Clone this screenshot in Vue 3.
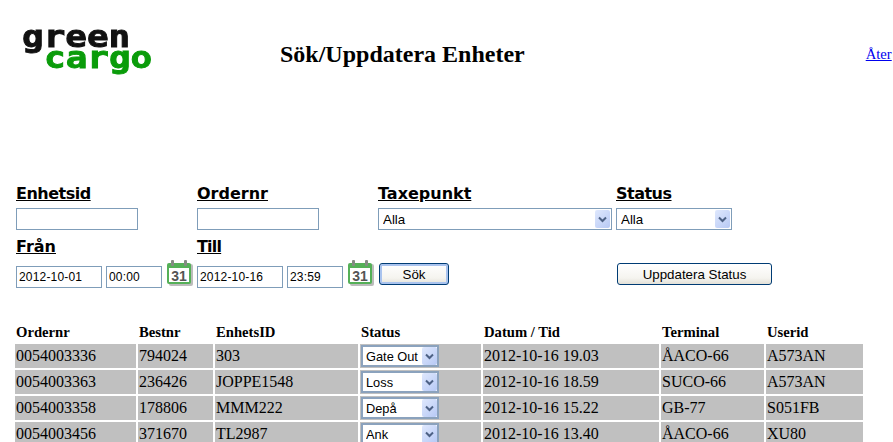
<script setup>
const rows = [
  { order: '0054003336', best: '794024', id: '303', status: 'Gate Out', date: '2012-10-16 19.03', terminal: 'ÅACO-66', user: 'A573AN' },
  { order: '0054003363', best: '236426', id: 'JOPPE1548', status: 'Loss', date: '2012-10-16 18.59', terminal: 'SUCO-66', user: 'A573AN' },
  { order: '0054003358', best: '178806', id: 'MMM222', status: 'Depå', date: '2012-10-16 15.22', terminal: 'GB-77', user: 'S051FB' },
  { order: '0054003456', best: '371670', id: 'TL2987', status: 'Ank', date: '2012-10-16 13.40', terminal: 'ÅACO-66', user: 'XU80' },
]
const headers = ['Ordernr', 'Bestnr', 'EnhetsID', 'Status', 'Datum / Tid', 'Terminal', 'Userid']
const widths = [121, 75, 143, 121, 176, 103, 97]
</script>

<template>
  <div class="page">
    <header class="top">
      <div class="logo" aria-label="green cargo">
        <span class="logo-green">green</span>
        <span class="logo-cargo">cargo</span>
      </div>
      <h1 class="title">Sök/Uppdatera Enheter</h1>
      <a class="back" href="#">Åter</a>
    </header>

    <form class="filters" @submit.prevent>
      <div class="cell">
        <label class="lbl tight">Enhetsid</label>
        <input class="field w122" type="text" />
      </div>
      <div class="cell">
        <label class="lbl">Ordernr</label>
        <input class="field w122" type="text" />
      </div>
      <div class="cell">
        <label class="lbl">Taxepunkt</label>
        <span class="sel w234">
          <select><option>Alla</option></select>
          <span class="arrow"><svg width="9" height="7" viewBox="0 0 9 7"><path d="M1 1.5 L4.5 5 L8 1.5" fill="none" stroke="#4d6185" stroke-width="2"/></svg></span>
        </span>
      </div>
      <div class="cell">
        <label class="lbl tight">Status</label>
        <span class="sel w116">
          <select><option>Alla</option></select>
          <span class="arrow"><svg width="9" height="7" viewBox="0 0 9 7"><path d="M1 1.5 L4.5 5 L8 1.5" fill="none" stroke="#4d6185" stroke-width="2"/></svg></span>
        </span>
      </div>

      <div class="cell second">
        <label class="lbl">Från</label>
        <div class="dates">
          <input class="field date" type="text" value="2012-10-01" />
          <input class="field time" type="text" value="00:00" />
          <svg class="cal" width="26" height="26" viewBox="0 0 26 26">
            <rect x="2" y="4" width="24" height="22" rx="2" fill="#bcbcbc"/>
            <rect x="0" y="3" width="24" height="21" rx="2" fill="#55b058"/>
            <rect x="2" y="8" width="20" height="14" fill="#fff"/>
            <rect x="4" y="0" width="3" height="6" rx="1" fill="#858b84"/>
            <rect x="17" y="0" width="3" height="6" rx="1" fill="#858b84"/>
            <text x="12" y="20.5" class="cal-num">31</text>
          </svg>
        </div>
      </div>
      <div class="cell second">
        <label class="lbl narrow">Till</label>
        <div class="dates">
          <input class="field date" type="text" value="2012-10-16" />
          <input class="field time" type="text" value="23:59" />
          <svg class="cal" width="26" height="26" viewBox="0 0 26 26">
            <rect x="2" y="4" width="24" height="22" rx="2" fill="#bcbcbc"/>
            <rect x="0" y="3" width="24" height="21" rx="2" fill="#55b058"/>
            <rect x="2" y="8" width="20" height="14" fill="#fff"/>
            <rect x="4" y="0" width="3" height="6" rx="1" fill="#858b84"/>
            <rect x="17" y="0" width="3" height="6" rx="1" fill="#858b84"/>
            <text x="12" y="20.5" class="cal-num">31</text>
          </svg>
        </div>
      </div>
      <div class="cell second btn-cell">
        <button class="btn primary" type="button">Sök</button>
      </div>
      <div class="cell second btn-cell">
        <button class="btn wide" type="button">Uppdatera Status</button>
      </div>
    </form>

    <table class="grid">
      <colgroup>
        <col v-for="w in widths" :key="w" :style="{ width: w + 'px' }" />
      </colgroup>
      <thead>
        <tr><th v-for="h in headers" :key="h">{{ h }}</th></tr>
      </thead>
      <tbody>
        <tr v-for="r in rows" :key="r.order">
          <td>{{ r.order }}</td>
          <td>{{ r.best }}</td>
          <td>{{ r.id }}</td>
          <td class="status-cell">
            <span class="sel w78">
              <select><option>{{ r.status }}</option></select>
              <span class="arrow"><svg width="9" height="7" viewBox="0 0 9 7"><path d="M1 1.5 L4.5 5 L8 1.5" fill="none" stroke="#4d6185" stroke-width="2"/></svg></span>
            </span>
          </td>
          <td>{{ r.date }}</td>
          <td>{{ r.terminal }}</td>
          <td>{{ r.user }}</td>
        </tr>
      </tbody>
    </table>
  </div>
</template>

<style>
html, body { margin: 0; overflow: hidden; background: #fff; }
</style>

<style scoped>
.page {
  width: 893px;
  height: 442px;
  overflow: hidden;
  font-family: "Liberation Serif", serif;
  color: #000;
}
.top {
  display: flex;
  align-items: flex-start;
  height: 184px;
  box-sizing: border-box;
  padding: 26px 0 0 22px;
  position: relative;
}
.logo {
  width: 258px;
  font-family: "DejaVu Sans Mono", monospace;
  font-weight: bold;
  font-size: 31px;
  line-height: 21px;
  display: flex;
  flex-direction: column;
  align-items: flex-start;
  -webkit-text-stroke: 0.9px currentColor;
  filter: blur(0.3px);
}
.logo span { display: block; transform: scaleX(1.16); transform-origin: left center; }
.logo-green { color: #111; }
.logo-cargo { color: #0a9c0a; margin-left: 22px; }
.title {
  margin: 15px 0 0;
  font-size: 24px;
  line-height: 27px;
  font-weight: bold;
  white-space: nowrap;
}
.back {
  margin: 20px 0 0 341px;
  font-size: 14.67px;
  line-height: 17px;
  color: #0000ee;
  white-space: nowrap;
}
.filters {
  display: grid;
  grid-template-columns: 181px 181px 238px 1fr;
  margin-left: 16px;
}
.cell { display: flex; flex-direction: column; align-items: flex-start; }
.lbl {
  font-family: "DejaVu Sans", Verdana, sans-serif;
  font-weight: bold;
  font-size: 16px;
  line-height: 20px;
  height: 24px;
  text-decoration: underline;
}
.tight { letter-spacing: -0.5px; }
.narrow { letter-spacing: -0.8px; }
.second { margin-top: 8px; }
.second .lbl { height: 22px; line-height: 18px; }
.field {
  box-sizing: border-box;
  height: 22px;
  border: 1px solid #7f9db9;
  background: #fff;
  padding: 0 2px;
  margin: 0;
  font-family: "Liberation Sans", Arial, sans-serif;
  font-size: 12px;
  letter-spacing: 0.18px;
  color: #000;
  outline: none;
}
.w122 { width: 122px; }
.dates { display: flex; align-items: flex-start; height: 28px; margin-top: -1px; position: relative; }
.date { width: 86px; margin-top: 7px; }
.time { width: 56px; margin-left: 4px; margin-top: 7px; }
.cal { margin-left: 5px; margin-top: 1px; display: block; }
.cal-num {
  font-family: "Liberation Sans", Arial, sans-serif;
  font-weight: bold;
  font-size: 14px;
  fill: #555;
  text-anchor: middle;
}
.btn-cell { padding: 25px 0 0 1px; }
.btn {
  box-sizing: border-box;
  height: 22px;
  padding: 0;
  border: 1px solid #003c74;
  border-radius: 3px;
  background: linear-gradient(#ffffff, #f5f4ef 70%, #e3e1d8);
  font-family: "Liberation Sans", Arial, sans-serif;
  font-size: 13.33px;
  color: #000;
}
.primary {
  width: 70px;
  box-shadow: inset 0 0 0 2px #a9c3ee, inset 0 -2px 0 0 #4a78d8;
}
.wide { width: 155px; }
.sel {
  position: relative;
  display: inline-block;
  box-sizing: border-box;
  height: 22px;
  border: 1px solid #7f9db9;
  background: #fff;
}
.sel select {
  appearance: none;
  display: block;
  width: 100%;
  height: 100%;
  border: 0;
  outline: 0;
  margin: 0;
  padding: 0 0 0 4px;
  background: transparent;
  font-family: "Liberation Sans", Arial, sans-serif;
  font-size: 13.33px;
  color: #000;
}
.arrow {
  position: absolute;
  right: 1px;
  top: 1px;
  bottom: 1px;
  width: 15px;
  border-radius: 2px;
  background: linear-gradient(135deg, #dfe8fd, #b7c9f5);
  display: flex;
  align-items: center;
  justify-content: center;
  pointer-events: none;
}
.w234 { width: 234px; }
.w116 { width: 116px; }
.w78 { width: 78px; }
.grid {
  table-layout: fixed;
  border-collapse: separate;
  border-spacing: 2px;
  margin: 35px 0 0 13px;
  width: 850px;
}
th {
  font-size: 14.67px;
  font-weight: bold;
  text-align: left;
  padding: 0 1px;
  height: 18px;
  line-height: 17px;
  vertical-align: top;
  white-space: nowrap;
}
td {
  background: #c0c0c0;
  font-size: 16px;
  line-height: 18px;
  height: 24px;
  padding: 0 1px;
  box-sizing: border-box;
  white-space: nowrap;
  overflow: hidden;
}
.status-cell { padding: 0 0 0 1px; }
.status-cell .sel { display: block; border: 2px solid #8ba2bd; }
.status-cell .sel select { font-size: 12.8px; padding-left: 3px; }
.status-cell .arrow { right: 0; top: 0; bottom: 0; }
</style>
